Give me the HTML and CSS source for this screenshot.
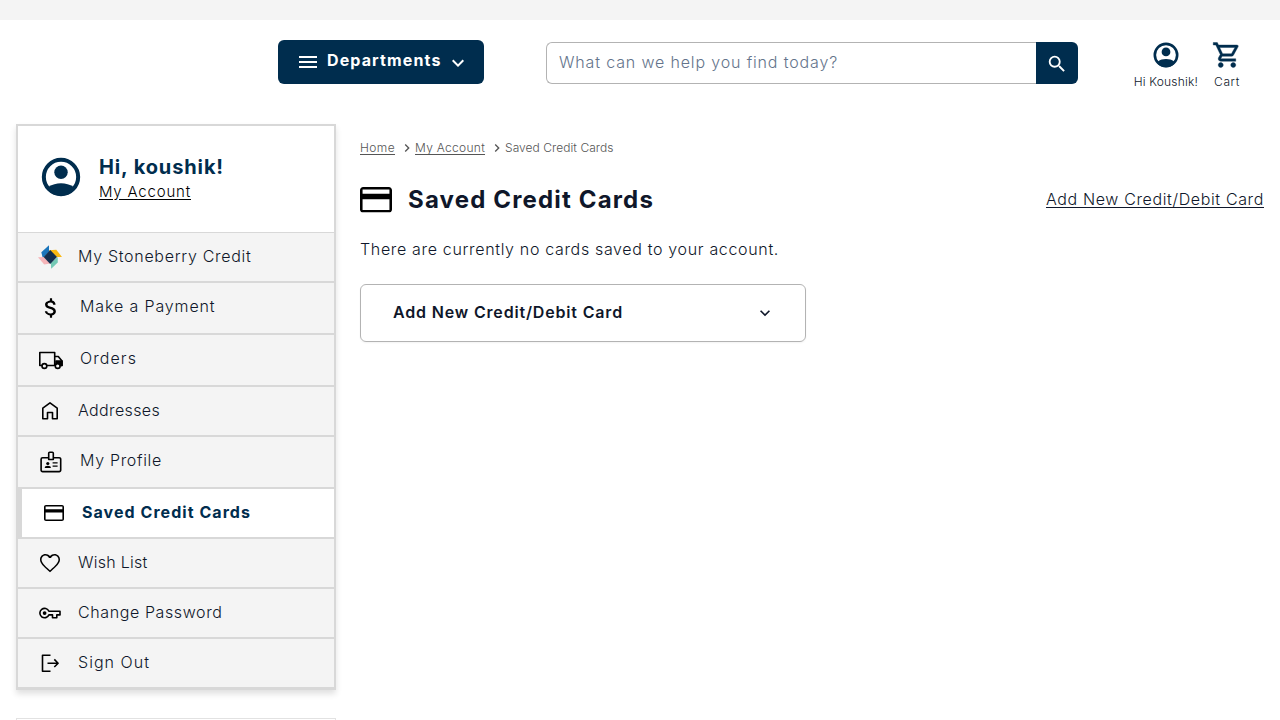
FILE: index.html
```html
<!DOCTYPE html>
<html lang="en">
<head>
<meta charset="utf-8">
<title>Saved Credit Cards</title>
<link rel="stylesheet" href="styles.css">
</head>
<body>
<svg class="defs">
  <symbol id="account" viewBox="0 0 24 24"><circle cx="12" cy="12" r="8.95" fill="none" stroke="currentColor" stroke-width="2.1"/><circle cx="12" cy="9.5" r="3.5"/><path d="M5.6 17.1C9 14.6 15 14.6 18.4 17.1L18.6 19.2A9.8 9.8 0 0 1 5.4 19.2Z"/></symbol>
  <symbol id="down" viewBox="0 0 24 24"><path d="M7.41 8.59 12 13.17l4.59-4.58L18 10l-6 6-6-6z"/></symbol>
  <symbol id="right" viewBox="0 0 24 24"><path d="M8.59 16.59 13.17 12 8.59 7.41 10 6l6 6-6 6z"/></symbol>
  <symbol id="card" viewBox="2 4 20 16"><path fill-rule="evenodd" d="M20 4H4c-1.11 0-2 .89-2 2v12c0 1.11.89 2 2 2h16c1.11 0 2-.89 2-2V6c0-1.11-.89-2-2-2zM20.4 18.4H3.6V11.6H20.4zM20.4 8.2H3.6V5.6H20.4z"/></symbol>
</svg>
<div class="topbar"></div>
<header class="header">
  <button class="departments">
    <svg class="i24" viewBox="0 0 24 24"><path d="M3 18h18v-2H3zm0-5h18v-2H3zm0-7v2h18V6z"/></svg>
    <span class="departments-label">Departments</span>
    <svg class="i24 departments-arrow"><use href="#down"/></svg>
  </button>
  <div class="search">
    <div class="search-field"><span class="search-hint">What can we help you find today?</span></div>
    <button class="search-button"><svg class="i22" viewBox="0 0 24 24"><path d="M15.5 14h-.79l-.28-.27A6.47 6.47 0 0 0 16 9.5 6.5 6.5 0 1 0 9.5 16c1.61 0 3.09-.59 4.23-1.57l.27.28v.79l5 4.99L20.49 19zm-6 0C7.01 14 5 11.99 5 9.5S7.01 5 9.5 5 14 7.01 14 9.5 11.99 14 9.5 14z"/></svg></button>
  </div>
  <nav class="user-nav">
    <a class="user-link"><svg class="i30"><use href="#account"/></svg><span class="user-hi">Hi Koushik!</span></a>
    <a class="user-link"><svg class="i30 cart-icon" viewBox="0 0 24 24"><path d="M15.55 13c.75 0 1.41-.41 1.75-1.03l3.58-6.49A.996.996 0 0 0 20.01 4H5.21l-.94-2H1v2h2l3.6 7.59-1.35 2.44C4.52 15.37 5.48 17 7 17h12v-2H7l1.1-2zM6.16 6h12.15l-2.76 5H8.53zM7 18c-1.1 0-1.99.9-1.99 2S5.9 22 7 22s2-.9 2-2-.9-2-2-2zm10 0c-1.1 0-1.99.9-1.99 2s.89 2 1.99 2 2-.9 2-2-.9-2-2-2z"/></svg><span class="user-cart">Cart</span></a>
  </nav>
</header>
<div class="page">
  <div class="side">
  <aside class="sidebar">
    <div class="profile">
      <svg class="i46"><use href="#account"/></svg>
      <div class="profile-text"><div class="profile-name">Hi, koushik!</div><a class="profile-link">My Account</a></div>
    </div>
    <a class="item"><svg class="i24" viewBox="0 0 24 24"><path fill="#1a75bb" d="M3.3 7.2 11 .3V6.7L4.800 13z"/><path fill="#fbb912" d="M10.8 5.3 18.3 4.8 24 12H18.4z"/><path fill="#f5b5b9" d="M0 12.3 6.1 12 12.3 18.6 6.2 19.5z"/><path fill="#74c9b5" d="M12.8 18 19.7 12 19.8 17.5 13.2 23.8z"/><path fill="#132f4f" d="m12.2 5 6.8 7-6.8 7-6.6-7z"/></svg><span class="item-credit">My Stoneberry Credit</span></a>
    <a class="item"><svg class="i26" viewBox="0 0 24 24"><path d="M11.8 10.9c-2.27-.59-3-1.2-3-2.15 0-1.09 1.01-1.85 2.7-1.85 1.78 0 2.44.85 2.5 2.1h2.21c-.07-1.72-1.12-3.3-3.21-3.81V3h-2v2.16c-1.94.42-4.500 1.68-4.500 3.61 0 2.31 1.91 3.46 4.7 4.13 2.5.6 3 1.48 3 2.41 0 .69-.49 1.79-2.7 1.79-2.06 0-2.87-.92-2.98-2.1h-2.2c.12 2.19 2.760 3.42 4.680 3.83V21h2v-2.15c1.95-.37 3.5-1.5 3.5-3.55 0-2.84-2.43-3.81-4.7-4.4z"/></svg><span class="item-payment">Make a Payment</span></a>
    <a class="item"><svg class="i26 stroke" viewBox="0 0 26 26"><path d="M4 18.500H1.800V5.5H16.700V18.500H8.500M16.700 9.500h3.6l3.700 4.6v4.4h-1M17 18.500H9"/><path fill="#000" d="M18 14h6v4.500h-2a2.600 2.600 0 0 0-4-1.500z"/><circle cx="6.400" cy="19" r="2.400" fill="#f4f4f4"/><circle cx="19.700" cy="19" r="2.400" fill="#f4f4f4"/></svg><span class="item-orders">Orders</span></a>
    <a class="item"><svg class="i24 stroke" viewBox="0 0 24 24"><path d="M4.800 19.700V9.200L12 3.900 19.200 9.200v10.500h-4.700v-6.200h-5v6.200z"/></svg><span class="item-addresses">Addresses</span></a>
    <a class="item"><svg class="i26 stroke" viewBox="0 0 26 26"><path d="M10.700 8.700H4.600a1.500 1.500 0 0 0-1.500 1.500v10.900A1.500 1.500 0 0 0 4.600 22.600h16.600a1.500 1.500 0 0 0 1.500-1.500v-10.900A1.500 1.500 0 0 0 21.200 8.700h-5.900M10.700 10.500V4.200q0-1 1-1h2.600q1 0 1 1V10.500z"/><g stroke="none" fill="#000"><circle cx="9.800" cy="14.500" r="1.600"/><path d="M6.800 19v-.6q0-1.600 3-1.600t3 1.600v.6zM14.600 13.300h5v1.300h-5zM14.600 16.500h5v1.300h-5z"/></g></svg><span class="item-profile">My Profile</span></a>
    <a class="item active"><span class="card-slot"><svg class="card-small"><use href="#card"/></svg></span><span class="item-cards">Saved Credit Cards</span></a>
    <a class="item"><svg class="i24" viewBox="0 0 24 24"><path d="M16.5 3c-1.74 0-3.41.81-4.5 2.09C10.91 3.81 9.24 3 7.5 3 4.42 3 2 5.42 2 8.5c0 3.78 3.4 6.86 8.55 11.54L12 21.35l1.45-1.32C18.6 15.36 22 12.28 22 8.5 22 5.42 19.58 3 16.5 3zm-4.07 15.98-.43.39-.43-.39C6.6 14.48 3.55 11.71 3.55 8.5c0-2.26 1.69-3.95 3.95-3.95 1.46 0 2.91.98 3.46 2.35h2.09c.54-1.37 1.99-2.35 3.45-2.35 2.26 0 3.95 1.69 3.95 3.95 0 3.21-3.05 5.98-8.02 10.48z"/></svg><span class="item-wish">Wish List</span></a>
    <a class="item"><svg class="i24 stroke" viewBox="0 0 24 24"><path d="M10.900 10.300A4.700 4.700 0 1 0 10.900 13.900H14.500V16.700H18.800V13.900H22V10.300z"/><circle cx="6.600" cy="12.100" r="1.100" fill="#000"/></svg><span class="item-password">Change Password</span></a>
    <a class="item"><svg class="i24 stroke" viewBox="0 0 24 24"><path d="M12.500 4.200H4.500V20.200H12.500M9.500 12.200h10.500M16.300 8.400l3.800 3.800L16.300 16"/></svg><span class="item-signout">Sign Out</span></a>
  </aside>
  <div class="next-panel"></div>
  </div>
  <main class="main">
    <nav class="crumbs"><a class="crumb-home">Home</a><svg class="i16"><use href="#right"/></svg><a class="crumb-account">My Account</a><svg class="i16"><use href="#right"/></svg><span class="crumb-current">Saved Credit Cards</span></nav>
    <div class="title-row">
      <svg class="card-large"><use href="#card"/></svg>
      <h1 class="title">Saved Credit Cards</h1>
      <a class="add-link">Add New Credit/Debit Card</a>
    </div>
    <p class="empty">There are currently no cards saved to your account.</p>
    <div class="accordion"><span class="accordion-label">Add New Credit/Debit Card</span><svg class="i20"><use href="#down"/></svg></div>
  </main>
</div>
</body>
</html>
```
FILE: styles.css
```css
* { box-sizing: border-box; }
body { margin: 0; height: 720px; overflow: hidden; font: 300 16px/24px Inter, "Open Sans", sans-serif; color: #0f172a; background: #fff; }
svg { display: block; flex: none; fill: currentColor; }
button { border: 0; padding: 0; font: inherit; color: #fff; background: #002d4e; }
a, span, h1 { white-space: nowrap; }
.defs { display: none; }
.i16 { width: 16px; height: 16px; }
.i20 { width: 20px; height: 20px; }
.i22 { width: 22px; height: 22px; }
.i24 { width: 24px; height: 24px; }
.i26 { width: 26px; height: 26px; }
.i30 { width: 30px; height: 30px; }
.i46 { width: 46px; height: 46px; color: #002d4e; }
.stroke { fill: none; stroke: #000; stroke-width: 1.6; stroke-linejoin: round; }

.topbar { height: 20px; background: #f4f4f4; }
.header { display: flex; height: 104px; padding: 20px 38px 0 278px; }
.departments { display: flex; width: 206px; height: 44px; padding: 10px 0 0 18px; border-radius: 6px; }
.departments-label { margin: -2px 0 0 7px; font-weight: 700; letter-spacing: 1.126px; }
.departments-arrow { margin: 1px 0 0 4px; }
.search { display: flex; width: 532px; height: 42px; margin: 2px 0 0 62px; }
.search-field { width: 490px; padding: 7px 12px; border: 1px solid #b3b3b3; border-right: 0; border-radius: 6px 0 0 6px; color: #64748b; }
.search-hint { letter-spacing: .849px; }
.search-button { display: flex; width: 42px; align-items: center; justify-content: center; padding-top: 2px; border-radius: 0 6px 6px 0; }
.user-nav { display: flex; gap: 14px; margin-left: auto; }
.user-link { display: flex; flex-direction: column; align-items: center; gap: 4px; font-size: 12px; line-height: 16px; }
.user-link svg { color: #002d4e; }
.cart-icon { stroke: currentColor; stroke-width: .3; }
.user-hi { letter-spacing: .181px; }
.user-cart { letter-spacing: .645px; }

.page { display: flex; gap: 24px; padding: 0 16px; }
.side { width: 320px; flex: none; }
.sidebar { border: 2px solid #d8d8d8; box-shadow: 0 4px 6px rgba(0,0,0,.12); }
.profile { display: flex; gap: 15px; height: 106px; padding: 28px 20px 0 20px; }
.profile svg { margin-left: -.5px; margin-right: .5px; }
.profile-text { padding-top: 1px; }
.profile-name { font-size: 20px; font-weight: 700; color: #002d4e; letter-spacing: .878px; }
.profile-link { font-size: 15px; color: #000; letter-spacing: .805px; text-decoration: underline; text-underline-offset: 2px; }
.item { display: flex; align-items: flex-start; gap: 16px; padding: 12px 20px; border: solid #d8d8d8; border-width: 1px 0; background: #f4f4f4; line-height: 22px; }
.item svg { color: #000; }
.active { border-left-width: 4px; background: #fff; color: #002d4e; font-weight: 700; }
.card-slot { display: flex; width: 24px; height: 24px; align-items: center; justify-content: center; }
.card-small { width: 20px; height: 16px; }
.item-credit { letter-spacing: .698px; }
.item-payment { letter-spacing: .875px; }
.item-orders { letter-spacing: 1.076px; }
.item-addresses { letter-spacing: .359px; }
.item-profile { letter-spacing: .686px; }
.item-cards { letter-spacing: 1.052px; }
.item-wish { letter-spacing: .259px; }
.item-password { letter-spacing: .607px; }
.item-signout { letter-spacing: 1.033px; }
.next-panel { height: 2px; margin-top: 28px; border: 1px solid #e2e2e2; border-bottom: 0; }

.main { flex: 1; padding-top: 16px; }
.crumbs { display: flex; align-items: center; height: 16px; font-size: 12px; line-height: 16px; color: #555; }
.crumbs svg { margin-left: 4px; }
.crumbs a, .add-link { text-decoration: underline; text-underline-offset: 2px; }
.crumb-home { letter-spacing: .395px; }
.crumb-account { letter-spacing: .284px; }
.crumb-current { letter-spacing: .049px; }
.title-row { display: flex; align-items: center; height: 32px; margin-top: 28px; }
.card-large { width: 32px; height: 25.6px; color: #000; }
.title { margin: 0 auto 0 16px; font-size: 24px; line-height: 32px; font-weight: 700; letter-spacing: 1.161px; }
.add-link { line-height: 22px; margin-bottom: 2px; letter-spacing: .631px; }
.empty { margin: 21px 0 0; letter-spacing: .663px; }
.accordion { display: flex; align-items: center; justify-content: space-between; width: 446px; height: 58px; margin-top: 23px; padding: 0 30px 0 32px; border: 1px solid #b3b3b3; border-radius: 6px; box-shadow: 0 1px 2px rgba(0,0,0,.05); font-weight: 600; }
.accordion-label { margin-bottom: 2px; letter-spacing: .833px; }
```
